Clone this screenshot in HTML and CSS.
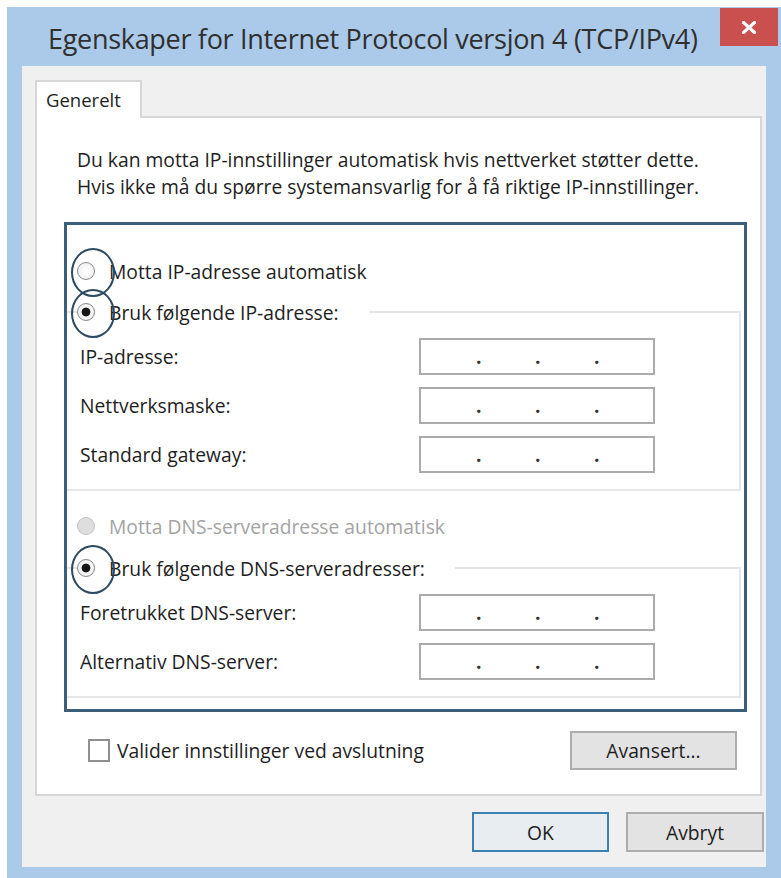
FILE: index.html
```html
<!DOCTYPE html>
<html lang="no">
<head>
<meta charset="utf-8">
<title>Egenskaper for Internet Protocol versjon 4 (TCP/IPv4)</title>
<link rel="stylesheet" href="styles.css">
</head>
<body>
<div class="window">
  <div class="titlebar">
    <div class="title">Egenskaper for Internet Protocol versjon 4 (TCP/IPv4)</div>
    <button class="close" aria-label="Lukk">
      <svg viewBox="0 0 14 13" width="14" height="13"><path d="M1.5 1.5 L12.5 11.5 M12.5 1.5 L1.5 11.5" stroke="#fff" stroke-width="3.2" stroke-linecap="square"/></svg>
    </button>
  </div>
  <div class="client">
    <div class="tabs"><div class="tab">Generelt</div></div>
    <div class="panel">
      <p class="intro">Du kan motta IP-innstillinger automatisk hvis nettverket støtter dette.<br>Hvis ikke må du spørre systemansvarlig for å få riktige IP-innstillinger.</p>
      <div class="focus-box">
        <div class="option"><span class="radio marked"></span><span>Motta IP-adresse automatisk</span></div>
        <fieldset class="group">
          <legend><span class="option"><span class="radio checked marked"></span><span>Bruk følgende IP-adresse:</span></span></legend>
          <div class="fields">
            <span>IP-adresse:</span>
            <span class="ip"><span class="oct"></span><span class="dot">.</span><span class="oct"></span><span class="dot">.</span><span class="oct"></span><span class="dot">.</span><span class="oct"></span></span>
            <span>Nettverksmaske:</span>
            <span class="ip"><span class="oct"></span><span class="dot">.</span><span class="oct"></span><span class="dot">.</span><span class="oct"></span><span class="dot">.</span><span class="oct"></span></span>
            <span>Standard gateway:</span>
            <span class="ip"><span class="oct"></span><span class="dot">.</span><span class="oct"></span><span class="dot">.</span><span class="oct"></span><span class="dot">.</span><span class="oct"></span></span>
          </div>
        </fieldset>
        <div class="option option-dns disabled"><span class="radio"></span><span>Motta DNS-serveradresse automatisk</span></div>
        <fieldset class="group group-dns">
          <legend><span class="option"><span class="radio checked marked"></span><span>Bruk følgende DNS-serveradresser:</span></span></legend>
          <div class="fields">
            <span>Foretrukket DNS-server:</span>
            <span class="ip"><span class="oct"></span><span class="dot">.</span><span class="oct"></span><span class="dot">.</span><span class="oct"></span><span class="dot">.</span><span class="oct"></span></span>
            <span>Alternativ DNS-server:</span>
            <span class="ip"><span class="oct"></span><span class="dot">.</span><span class="oct"></span><span class="dot">.</span><span class="oct"></span><span class="dot">.</span><span class="oct"></span></span>
          </div>
        </fieldset>
      </div>
      <div class="panel-footer">
        <span class="checkbox"></span>
        <span class="check-label">Valider innstillinger ved avslutning</span>
        <button class="btn btn-advanced">Avansert...</button>
      </div>
    </div>
    <div class="actions">
      <button class="btn btn-ok">OK</button>
      <button class="btn btn-cancel">Avbryt</button>
    </div>
  </div>
</div>
</body>
</html>
```

FILE: styles.css
```css
* { box-sizing: border-box; }

html, body { margin: 0; padding: 0; }

body {
  background: #fff;
  font-family: "Open Sans", "Noto Sans", sans-serif;
  font-size: 19.3px;
  color: #1e1e1e;
}

/* window frame */
.window {
  margin: 7px 0 0 7px;
  width: 774px;
  height: 871px;
  background: #abc9e9;
  display: flex;
  flex-direction: column;
}

.titlebar {
  flex: none;
  height: 59px;
  display: flex;
  align-items: flex-start;
}

.title {
  padding: 12px 0 0 41px;
  font-size: 27px;
  letter-spacing: -0.3px;
  line-height: 40px;
  color: #2f2f2f;
  white-space: nowrap;
}

.close {
  margin: 1px 3px 0 auto;
  width: 58px;
  height: 38px;
  border: 0;
  padding: 0;
  background: #c9504f;
  display: flex;
  align-items: center;
  justify-content: center;
}

/* dialog client area */
.client {
  flex: 1;
  margin: 0 15px 11px;
  background: #f0f0f0;
  padding: 14px 2px 0 13px;
  display: flex;
  flex-direction: column;
}

.tabs { display: flex; }

.tab {
  position: relative;
  z-index: 1;
  width: 107px;
  height: 38px;
  margin-bottom: -2px;
  background: #fff;
  border: 2px solid #d7d7d7;
  border-bottom: 0;
  padding-left: 9px;
  line-height: 36px;
  font-size: 18.5px;
}

.panel {
  height: 680px;
  margin-right: 2px;
  background: #fff;
  border: 2px solid #d7d7d7;
  padding: 29px 13px 0 27px;
}

.intro {
  margin: 0 0 0 13px;
  line-height: 26.5px;
}

/* highlighted settings area */
.focus-box {
  margin-top: 22px;
  border: 3px solid #3d5e7b;
  padding: 30px 3px 11px 0;
}

.option {
  display: flex;
  align-items: center;
  gap: 14px;
  height: 32px;
  padding-left: 10px;
  white-space: nowrap;
}

.option.disabled { color: #a3a3a3; }

.option-dns { margin-top: 19px; }

.radio {
  flex: none;
  width: 18px;
  height: 18px;
  border-radius: 50%;
  border: 1.5px solid #8a8a8a;
  background: radial-gradient(circle, #ffffff 0, #ececec 100%);
}

.radio.checked {
  background: radial-gradient(circle, #151515 0 4px, #f7f7f7 4.8px, #e9e9e9 100%);
}

.disabled .radio {
  border-color: #c4c4c4;
  background: #dedede;
}

/* hand-drawn ring around a radio */
.marked { position: relative; }

.marked::after {
  content: "";
  position: absolute;
  left: 50%;
  top: 50%;
  width: 40px;
  height: 45px;
  margin: -23px 0 0 -15px;
  border: 2.5px solid #2c4a60;
  border-radius: 50%;
}

.group {
  margin: 9px 0 0;
  padding: 10px 0 16px 13px;
  border: 2px solid #e6e6e6;
  border-left: 0;
  min-inline-size: 0;
}

.group-dns { margin-top: 10px; }

.group legend {
  margin-left: -3px;
  padding: 0 30px 0 0;
}

.group legend .option { padding-left: 0; }

.fields {
  display: grid;
  grid-template-columns: 339px 236px;
  grid-auto-rows: 37px;
  row-gap: 12px;
  align-items: center;
}

.ip {
  height: 37px;
  border: 2px solid #ababab;
  background: #fff;
  display: flex;
  align-items: center;
  color: #333;
}

.oct { flex: 1; }

.dot {
  width: 4px;
  text-align: center;
  line-height: 33px;
  font-weight: 700;
}

/* footer inside the tab page */
.panel-footer {
  margin-top: 19px;
  height: 39px;
  display: flex;
  align-items: center;
  padding-left: 24px;
}

.checkbox {
  width: 22px;
  height: 23px;
  border: 2px solid #8f8f8f;
  background: #fff;
  margin-right: 7px;
}

.btn {
  font-family: inherit;
  font-size: 19.3px;
  color: #1e1e1e;
  background: #e3e3e3;
  border: 2px solid #adadad;
  padding: 0;
}

.btn-advanced {
  margin: 0 10px 0 auto;
  width: 167px;
  height: 39px;
}

.actions {
  margin-top: 16px;
  display: flex;
  justify-content: flex-end;
  gap: 17px;
}

.btn-ok {
  width: 137px;
  height: 40px;
  border-color: #3c7fb1;
  background: #e8edf2;
}

.btn-cancel {
  width: 138px;
  height: 40px;
}
```
